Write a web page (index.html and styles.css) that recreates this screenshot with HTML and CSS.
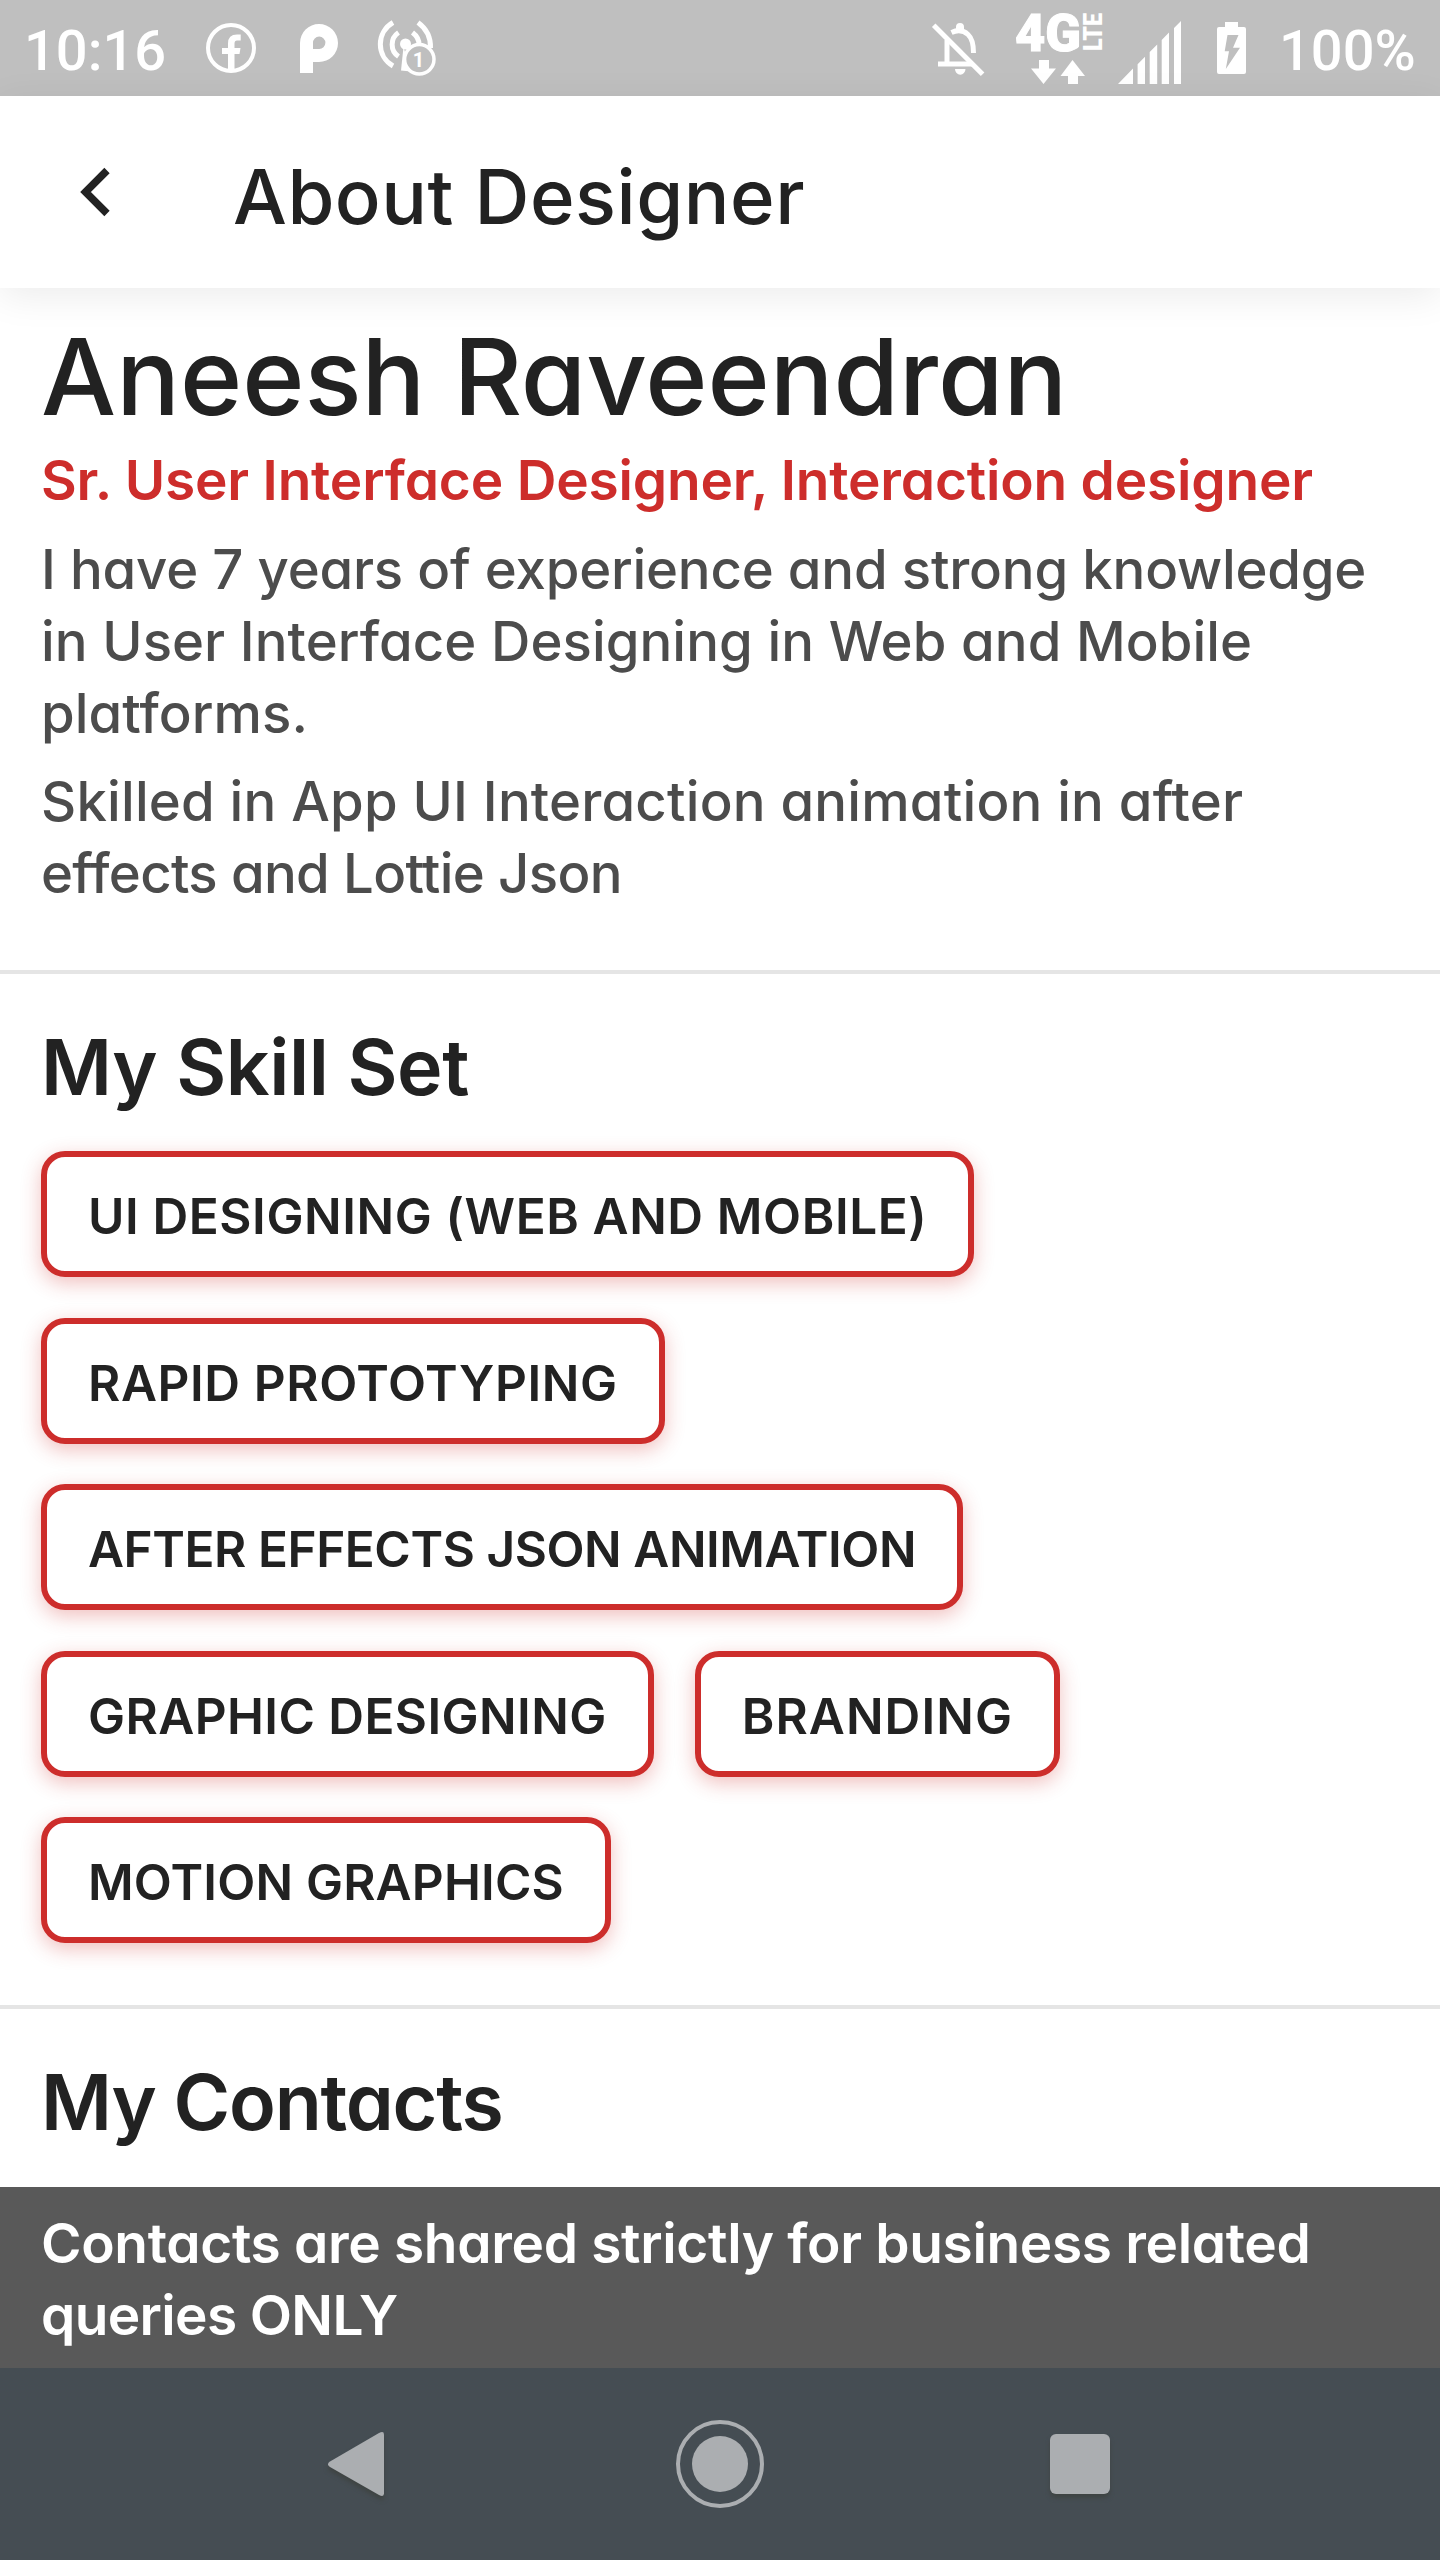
FILE: index.html
```html
<!DOCTYPE html>
<html lang="en">
<head>
<meta charset="utf-8">
<title>About Designer</title>
<link rel="stylesheet" href="styles.css">
</head>
<body>
<div class="screen">
  <div class="status">
    <span class="time">10:16</span>
    <svg class="ic-fb" width="50" height="60" viewBox="206 18 50 60"><circle cx="231" cy="48" r="23" fill="none" stroke="#fff" stroke-width="4"/><path d="M228 72V54h-6v-6h6v-4.500q0-9 9-9h3.700v6H237q-2.500 0-2.500 3V48h6l-1 6h-5v18z" fill="#fff"/></svg>
    <svg class="ic-p" width="38" height="60" viewBox="300 18 38 60"><path fill="#fff" fill-rule="evenodd" d="M300 73V43a19 19 0 1 1 19 19h-6v11zM313 49h6a6.200 6.200 0 1 0-6-6z"/></svg>
    <svg class="ic-cast" width="60" height="60" viewBox="377 18 60 60"><g fill="none" stroke="#fff" stroke-width="5"><path d="M393 22.500a25 25 0 0 0 0 43.500M418 22.500Q431 32 430.500 48M398.500 32.500a14.500 14.500 0 0 0 0 24M412.500 32.500q6.500 5 6.500 12"/></g><circle cx="405.500" cy="44" r="5.500" fill="#fff"/><path d="M403.500 47l-2.500 23.500 10 1z" fill="#fff"/><circle cx="419.300" cy="59.300" r="14.700" fill="#bfbfbf" stroke="#fff" stroke-width="3.500"/><text x="418.500" y="66.500" text-anchor="middle" class="badge">1</text></svg>
    <svg class="ic-bell" width="54" height="60" viewBox="931 18 54 60"><g fill="none" stroke="#fff" stroke-width="5"><path d="M933.700 25.300l48.900 49"/><path d="M938 64h35M947 40v24M951.500 32.500Q961 28 968 34.500q5.500 5 5.500 18.500"/></g><path d="M956 32v-5a4 4 0 0 1 8 0v5zM955 69h10.500a5.200 5.700 0 0 1-10.500 0z" fill="#fff"/></svg>
    <svg class="ic-net" width="90" height="76" viewBox="1014 10 90 76"><text x="1015" y="50.500" class="net" textLength="66" lengthAdjust="spacingAndGlyphs">4G</text><text transform="translate(1102 51) rotate(-90)" class="lte" textLength="38" lengthAdjust="spacingAndGlyphs">LTE</text><path fill="#fff" d="M1039 60h10v8.500h7l-12.500 15.500-12.500-15.500h8zM1072.500 60l12.500 16h-7v8h-10v-8h-7.500z"/></svg>
    <svg class="ic-sig" width="67" height="70" viewBox="1116 18 67 70"><path fill="#fff" d="M1118 84l15-15.500V84zM1137.600 84V64.300l7.400-7.600V84zM1149.700 84V52l7.500-7.600V84zM1161.700 84V40l7.300-7.500V84zM1174 84V28l7-7v63z"/></svg>
    <svg class="ic-bat" width="33" height="60" viewBox="1215 18 33 60"><path fill="#fff" fill-rule="evenodd" d="M1225 27v-5h13v5h6a2 2 0 0 1 2 2v43a2 2 0 0 1-2 2h-25a2 2 0 0 1-2-2V29a2 2 0 0 1 2-2zM1227.500 35l-2.800 16.300h4.300l-3.200 17.700L1240 47.700h-7l5.500-12.700z"/></svg>
    <span class="pct">100%</span>
  </div>

  <header class="bar">
    <svg width="30" height="50" viewBox="0 0 30 50"><path d="M27 3.500L5.500 25 27 46.500" fill="none" stroke="#222" stroke-width="7.500"/></svg>
    <h1>About Designer</h1>
  </header>

  <main>
    <section class="about">
      <h2 class="name">Aneesh Raveendran</h2>
      <p class="role">Sr. User Interface Designer, Interaction designer</p>
      <p class="text"><span class="tight">I have 7 years of experience and strong knowledge</span><br>in User Interface Designing in Web and Mobile<br>platforms.</p>
      <p class="text"><span class="loose">Skilled in App UI Interaction animation in after</span><br><span class="tighter">effects and Lottie Json</span></p>
    </section>
    <section class="skills">
      <h3>My Skill Set</h3>
      <ul class="chips">
        <li>UI DESIGNING (WEB AND MOBILE)</li>
        <li>RAPID PROTOTYPING</li>
        <li class="chip-tight">AFTER EFFECTS JSON ANIMATION</li>
        <li class="chip-even">GRAPHIC DESIGNING</li>
        <li class="chip-loose">BRANDING</li>
        <li class="chip-snug">MOTION GRAPHICS</li>
      </ul>
    </section>
    <section class="contacts"><h3>My Contacts</h3></section>
  </main>
  <div class="note">Contacts are shared strictly for business related<br><span class="tighter">queries ONLY</span></div>
  <nav class="nav">
    <svg width="64" height="76" viewBox="324 2426 64 76"><path class="sh" d="M330 2461.500l49-28.500q5-2.500 5 1.500v59q0 4-5 1.500l-49-28q-4-3-0-5.500z"/></svg>
    <svg width="88" height="88" viewBox="676 2420 88 88"><circle cx="720" cy="2464" r="42" fill="none" stroke="#abaeb1" stroke-width="4"/><circle cx="720" cy="2464" r="28" fill="#abaeb1"/></svg>
    <svg width="68" height="76" viewBox="1046 2426 68 76"><rect class="sh" x="1050" y="2434" width="60" height="60" rx="6"/></svg>
  </nav>
</div>
</body>
</html>
```
FILE: styles.css
```css
* { box-sizing: border-box; margin: 0; padding: 0; }
body { background: #fff; color: #222; font-family: Inter, "Noto Sans", sans-serif; font-feature-settings: "cv11" 1; }
.screen { width: 1440px; height: 2560px; display: flex; flex-direction: column; overflow: hidden; }
svg { display: block; flex: none; overflow: visible; }

/* Status bar */
.status { height: 96px; flex: none; display: flex; align-items: flex-start; padding: 18px 24px 0; background: #bfbfbf; color: #fff; font: 500 56px/66px Roboto, sans-serif; }
.time { width: 182px; }
.ic-p { margin-left: 44px; }
.ic-cast { margin-left: 39px; }
.ic-bell { margin-left: auto; }
.ic-net { margin: -8px 0 0 29px; }
.ic-sig { margin-left: 12px; }
.ic-bat { margin-left: 32px; }
.pct { width: 137px; margin-left: 31px; }
.badge { font: 700 20px Roboto, sans-serif; fill: #fff; }
.net { font: 900 51px Roboto, sans-serif; fill: #fff; stroke: #fff; stroke-width: 1px; }
.lte { font: 900 25px Roboto, sans-serif; fill: #fff; }

/* App bar */
.bar { height: 192px; flex: none; display: flex; align-items: center; padding-left: 80px; gap: 123px; background: #fff; box-shadow: 0 8px 36px rgba(0, 0, 0, .08); position: relative; }
.bar h1 { padding-top: 7px; font-size: 76px; font-weight: 500; letter-spacing: .5px; white-space: nowrap; }

main { flex: 1; min-height: 0; }
section { padding: 0 41px; white-space: nowrap; }
.about { padding-top: 25px; padding-bottom: 60.500px; border-bottom: 4px solid #e5e5e5; }
.name { font-size: 106px; line-height: 128px; font-weight: 500; }
.role { margin-top: 3px; font-size: 55px; line-height: 72px; font-weight: 600; letter-spacing: -.19px; color: #cd2d2b; }
.text { margin-top: 16.500px; font-size: 54.500px; line-height: 72.100px; font-weight: 500; letter-spacing: .06px; color: #4c4c4c; }
.tight { letter-spacing: -.2px; }
.loose { letter-spacing: .19px; }
.tighter { letter-spacing: -.65px; }
h3 { font-size: 77px; line-height: 96px; font-weight: 600; letter-spacing: -.41px; }

/* Skill chips */
.skills { padding-top: 45px; padding-bottom: 61.500px; border-bottom: 4px solid #e5e5e5; }
.chips { display: flex; flex-wrap: wrap; gap: 40.600px 41px; margin-top: 36px; list-style: none; }
.chips li { height: 126px; padding: 4px 41px 0; display: flex; align-items: center; border: 6px solid #cd2d2b; border-radius: 24px; background: #fff; font-size: 49.500px; font-weight: 600; letter-spacing: .6px; box-shadow: 0 6px 20px rgba(205, 45, 43, .3); }
.chips .chip-tight { letter-spacing: -.43px; }
.chips .chip-even { letter-spacing: .42px; }
.chips .chip-loose { letter-spacing: 1.100px; }
.chips .chip-snug { letter-spacing: .18px; }
.contacts { padding-top: 45px; }
.contacts h3 { letter-spacing: -1.250px; }

.note { height: 181px; flex: none; padding: 20px 41px 0; background: #595959; color: #fff; font-size: 55px; line-height: 72.100px; font-weight: 600; letter-spacing: -.33px; white-space: nowrap; }

/* System navigation */
.nav { height: 192px; flex: none; display: flex; align-items: center; padding-left: 324px; background: #454d53; }
.nav svg + svg { margin-left: 288px; }
.nav svg:last-child { margin-left: 282px; }
.sh { fill: #abaeb1; filter: drop-shadow(0 4px 2px rgba(60, 64, 60, .7)); }
```
